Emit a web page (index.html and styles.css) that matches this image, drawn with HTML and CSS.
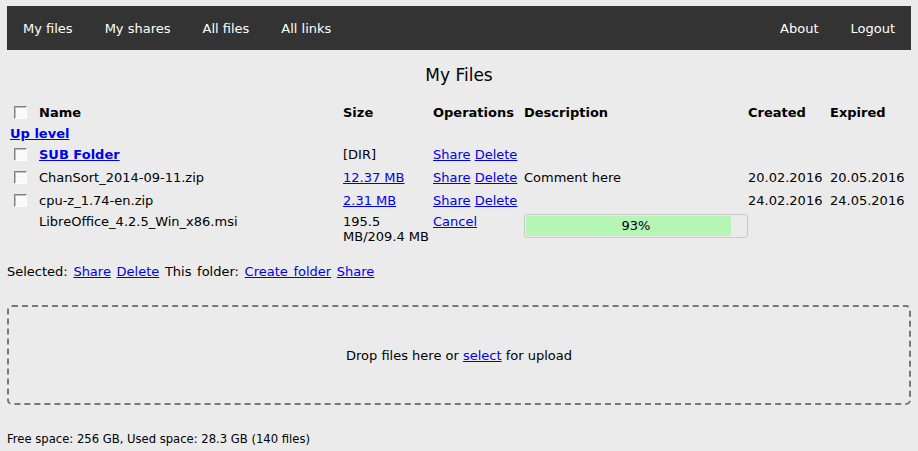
FILE: index.html
```html
<!DOCTYPE html>
<html lang="en">
<head>
<meta charset="utf-8">
<title>My Files</title>
<link rel="stylesheet" href="styles.css">
</head>
<body>
<nav class="topbar">
  <div class="nav-group">
    <a class="nav-link" href="#">My files</a>
    <a class="nav-link" href="#">My shares</a>
    <a class="nav-link" href="#">All files</a>
    <a class="nav-link" href="#">All links</a>
  </div>
  <div class="nav-group">
    <a class="nav-link" href="#">About</a>
    <a class="nav-link" href="#">Logout</a>
  </div>
</nav>

<h1 class="title">My Files</h1>

<table class="files">
  <thead>
    <tr>
      <th class="c-check"><input type="checkbox" class="cb"></th>
      <th class="c-name">Name</th>
      <th class="c-size">Size</th>
      <th class="c-ops">Operations</th>
      <th class="c-desc">Description</th>
      <th class="c-created">Created</th>
      <th class="c-expired">Expired</th>
    </tr>
  </thead>
  <tbody>
    <tr class="row-up">
      <td colspan="7"><a class="strong-link" href="#">Up level</a></td>
    </tr>
    <tr>
      <td><input type="checkbox" class="cb"></td>
      <td><a class="strong-link" href="#">SUB Folder</a></td>
      <td>[DIR]</td>
      <td><a href="#">Share</a> <a href="#">Delete</a></td>
      <td></td>
      <td></td>
      <td></td>
    </tr>
    <tr>
      <td><input type="checkbox" class="cb"></td>
      <td>ChanSort_2014-09-11.zip</td>
      <td><a href="#">12.37 MB</a></td>
      <td><a href="#">Share</a> <a href="#">Delete</a></td>
      <td>Comment here</td>
      <td>20.02.2016</td>
      <td>20.05.2016</td>
    </tr>
    <tr>
      <td><input type="checkbox" class="cb"></td>
      <td>cpu-z_1.74-en.zip</td>
      <td><a href="#">2.31 MB</a></td>
      <td><a href="#">Share</a> <a href="#">Delete</a></td>
      <td></td>
      <td>24.02.2016</td>
      <td>24.05.2016</td>
    </tr>
    <tr class="row-top">
      <td></td>
      <td>LibreOffice_4.2.5_Win_x86.msi</td>
      <td>195.5 MB/209.4 MB</td>
      <td><a href="#">Cancel</a></td>
      <td>
        <div class="progress">
          <div class="progress-fill" style="width: 93%"></div>
          <span class="progress-label">93%</span>
        </div>
      </td>
      <td></td>
      <td></td>
    </tr>
  </tbody>
</table>

<p class="actions">Selected: <a href="#">Share</a> <a href="#">Delete</a> This folder: <a href="#">Create folder</a> <a href="#">Share</a></p>

<div class="dropzone">
  <span>Drop files here or <a href="#">select</a> for upload</span>
</div>

<p class="footer">Free space: 256 GB, Used space: 28.3 GB (140 files)</p>
</body>
</html>
```

FILE: styles.css
```css
html, body {
  margin: 0;
  padding: 0;
}

body {
  background: #ebebeb;
  color: #000;
  font-family: "DejaVu Sans", Verdana, sans-serif;
  font-size: 13px;
  line-height: 15px;
  padding: 6px 7px 0;
}

a {
  color: #0000ee;
}

.topbar {
  background: #333333;
  height: 44px;
  display: flex;
  justify-content: space-between;
  align-items: center;
}

.nav-group {
  display: flex;
}

.nav-link {
  color: #ffffff;
  text-decoration: none;
  padding: 0 16px;
}

.title {
  font-size: 17px;
  line-height: 20px;
  font-weight: normal;
  text-align: center;
  margin: 15px 0 15px;
}

.files {
  width: 100%;
  table-layout: fixed;
  border-spacing: 2px;
  border-collapse: separate;
}

.files th,
.files td {
  padding: 1px;
  text-align: left;
  vertical-align: middle;
}

.files th {
  font-weight: bold;
}

.c-check { width: 25px; }
.c-name { width: 300px; }
.c-size { width: 86px; }
.c-ops { width: 87px; }
.c-desc { width: 220px; }
.c-created { width: 78px; }

.files .row-top td {
  vertical-align: top;
}

.strong-link {
  font-weight: bold;
}

.cb {
  appearance: none;
  -webkit-appearance: none;
  width: 13px;
  height: 13px;
  margin: 3px 3px 3px 4px;
  box-sizing: border-box;
  border: 1px solid;
  border-color: #808080 #ffffff #ffffff #808080;
  background: #fafafa;
  box-shadow: inset 1px 1px 0 #c0c0c0;
  vertical-align: middle;
  display: inline-block;
}

.progress {
  width: 220px;
  padding: 1px;
  border: 1px solid #c9c9c9;
  border-radius: 3px;
  display: grid;
}

.progress-fill {
  grid-area: 1 / 1;
  height: 20px;
  background: #b5f5b5;
  border-radius: 2px;
}

.progress-label {
  grid-area: 1 / 1;
  justify-self: center;
  line-height: 20px;
}

.actions {
  margin: 17px 0 0;
  word-spacing: 1.5px;
}

.dropzone {
  margin-top: 26px;
  height: 96px;
  border: 2px dashed #787878;
  border-radius: 5px;
  display: flex;
  align-items: center;
  justify-content: center;
}

.footer {
  margin: 27px 0 0;
  font-size: 11.6px;
  line-height: 14px;
}
```
